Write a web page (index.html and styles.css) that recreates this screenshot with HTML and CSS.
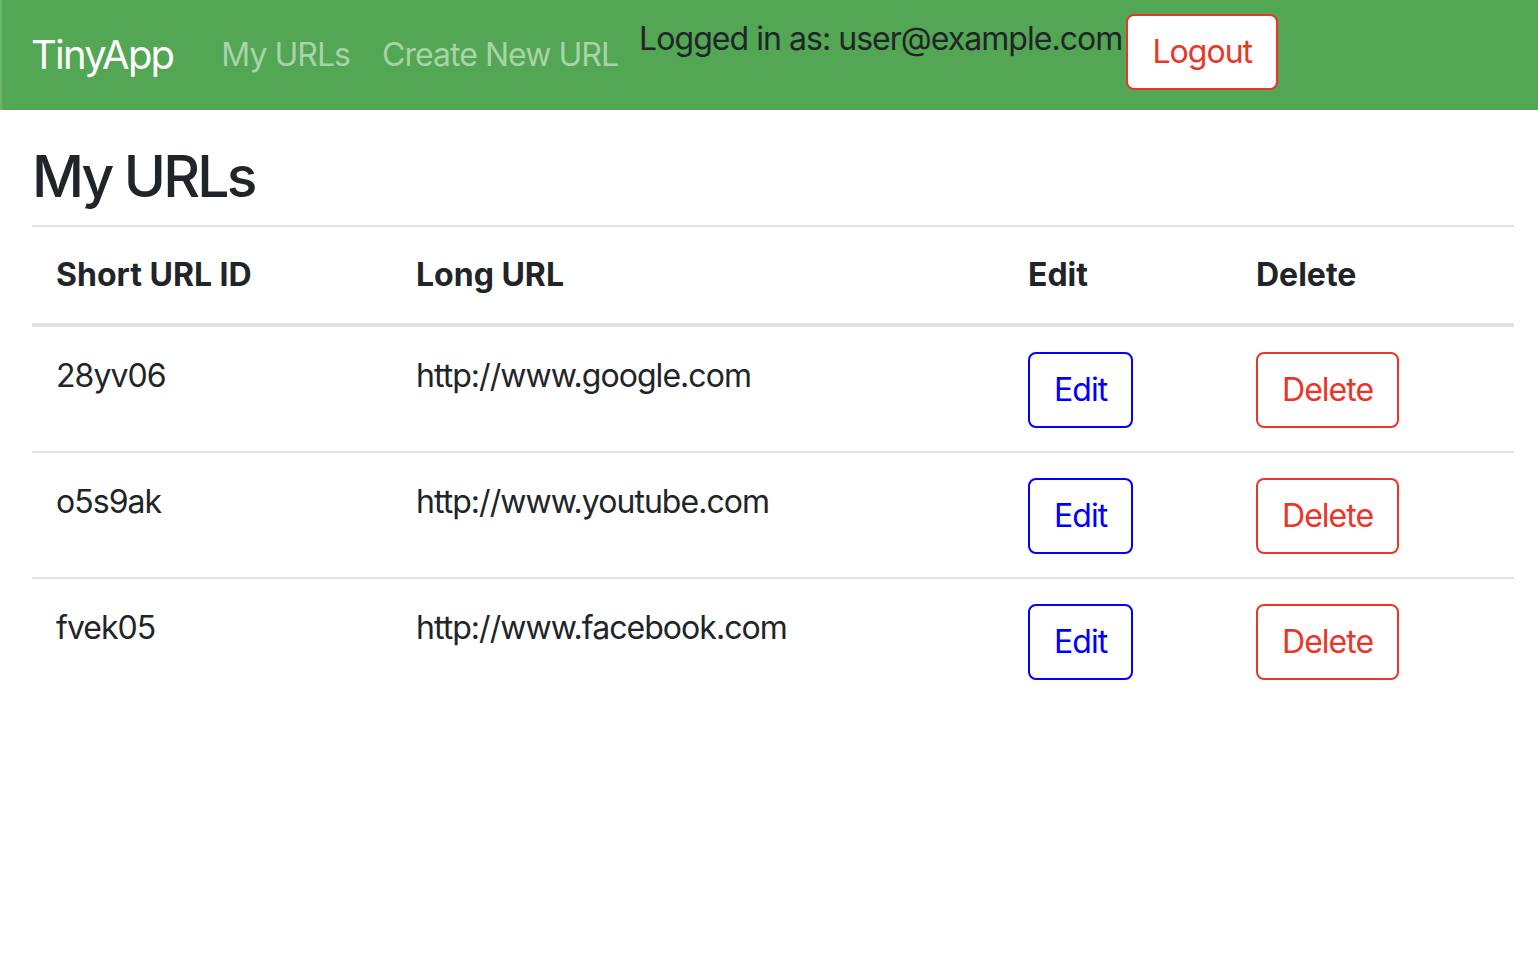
FILE: index.html
```html
<!DOCTYPE html>
<html lang="en">
<head>
<meta charset="utf-8">
<title>TinyApp</title>
<link rel="stylesheet" href="styles.css">
</head>
<body>
<nav class="navbar">
  <a class="brand" href="#">TinyApp</a>
  <div class="nav-links">
    <a class="nav-link" href="#">My URLs</a>
    <a class="nav-link" href="#">Create New URL</a>
  </div>
  <div class="user-box">
    <span class="logged">Logged in as: user@example.com</span>
    <button class="btn btn-red logout">Logout</button>
  </div>
</nav>
<main class="main">
  <h1 class="title">My URLs</h1>
  <table class="table">
    <thead>
      <tr>
        <th class="c1">Short URL ID</th>
        <th class="c2">Long URL</th>
        <th class="c3">Edit</th>
        <th class="c4">Delete</th>
      </tr>
    </thead>
    <tbody>
      <tr>
        <td>28yv06</td>
        <td>http://www.google.com</td>
        <td><button class="btn btn-blue">Edit</button></td>
        <td><button class="btn btn-red">Delete</button></td>
      </tr>
      <tr>
        <td>o5s9ak</td>
        <td>http://www.youtube.com</td>
        <td><button class="btn btn-blue">Edit</button></td>
        <td><button class="btn btn-red">Delete</button></td>
      </tr>
      <tr>
        <td>fvek05</td>
        <td>http://www.facebook.com</td>
        <td><button class="btn btn-blue">Edit</button></td>
        <td><button class="btn btn-red">Delete</button></td>
      </tr>
    </tbody>
  </table>
</main>
</body>
</html>
```
FILE: styles.css
```css
* { box-sizing: border-box; }
html, body { margin: 0; padding: 0; }
body {
  font-family: Inter, "Noto Sans", sans-serif;
  font-size: 32px;
  line-height: 48px;
  letter-spacing: -0.03em;
  color: #212529;
  background: #fff;
  width: 1538px;
  height: 958px;
  overflow: hidden;
}
.navbar {
  display: flex;
  align-items: flex-start;
  height: 110px;
  background: #53a653;
  border-left: 2px solid #6cb46c;
  padding: 0 0 0 29px;
}
.brand {
  color: #fff;
  text-decoration: none;
  font-size: 40px;
  line-height: 60px;
  letter-spacing: -0.045em;
  margin-top: 25px;
  margin-right: 32px;
}
.nav-links {
  display: flex;
  margin-top: 31px;
}
.nav-link {
  color: #a9d3a9;
  text-decoration: none;
  padding: 0 16px;
  line-height: 48px;
}
.user-box {
  display: flex;
  align-items: flex-start;
  margin-left: 5px;
}
.logged {
  margin-top: 15px;
  line-height: 48px;
}
.btn {
  font-family: inherit;
  font-size: 32px;
  line-height: 48px;
  letter-spacing: -0.03em;
  padding: 12px 24px;
  background: #fff;
  border: 2px solid;
  border-radius: 8px;
  cursor: pointer;
}
.btn-red { color: #e8362b; border-color: #e8362b; }
.btn-blue { color: #0000ff; border-color: #0000ff; }
.logout {
  margin-top: 14px;
  margin-left: 4px;
}
.main {
  padding: 0 24px 0 32px;
}
.title {
  font-size: 57px;
  font-weight: 500;
  letter-spacing: -0.05em;
  line-height: 72px;
  margin: 0 0 12px 0;
  padding-top: 31px;
}
.table {
  width: 100%;
  border-collapse: collapse;
}
.table th, .table td {
  text-align: left;
  vertical-align: top;
  padding: 24px;
  border-top: 2px solid #dee2e6;
}
.table th {
  font-weight: 700;
  letter-spacing: 0;
  border-bottom: 4px solid #dee2e6;
}
.table td { padding-top: 25px; padding-bottom: 23px; }
.c1 { width: 360px; }
.c2 { width: 612px; }
.c3 { width: 228px; }
.c4 { width: 282px; }
```
